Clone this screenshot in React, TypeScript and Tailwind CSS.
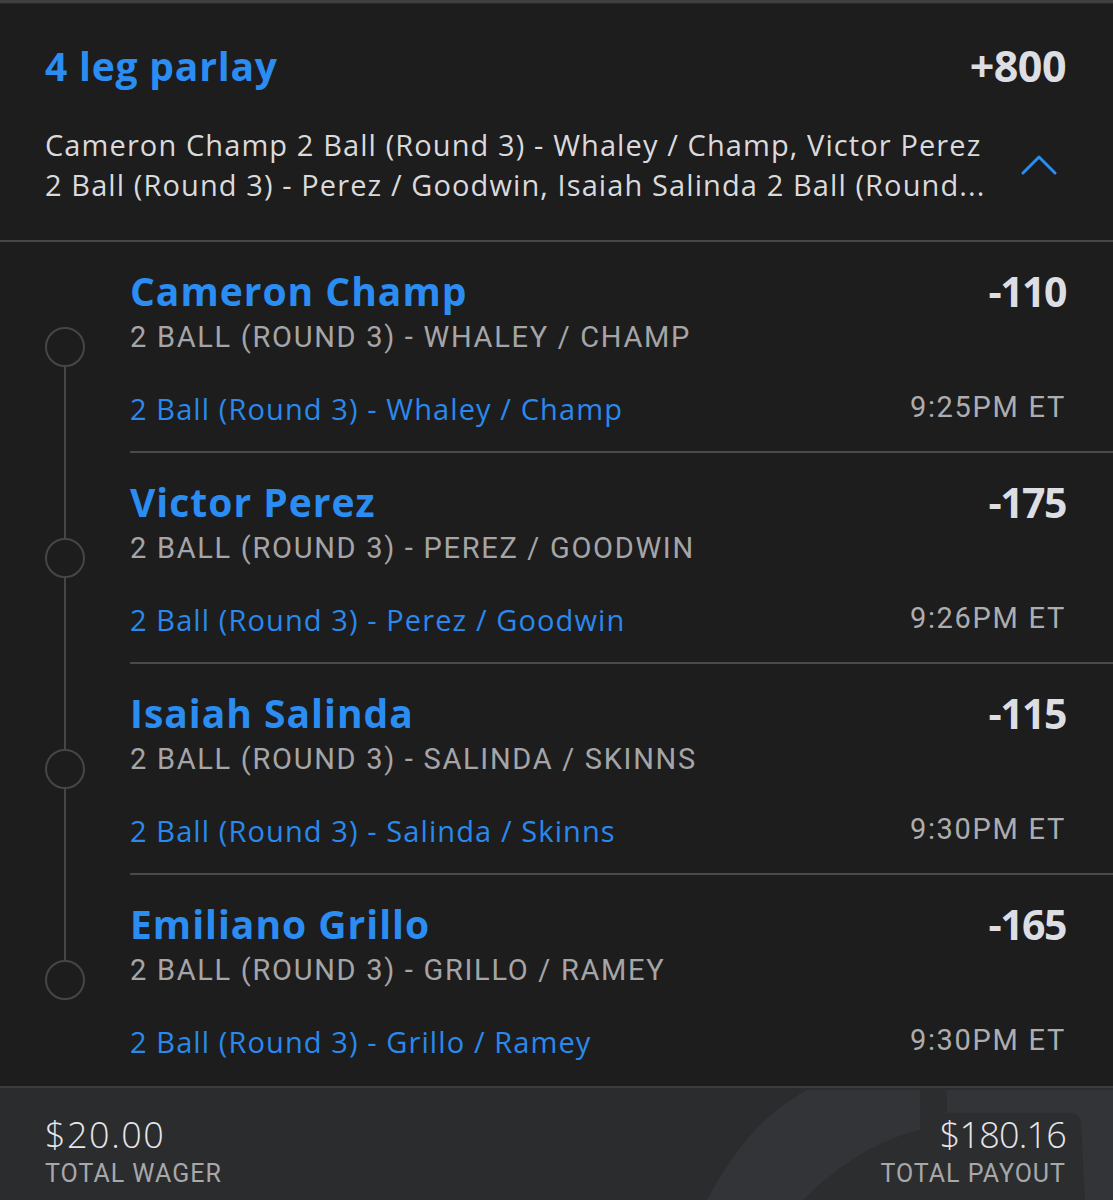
const legs = [
  { name: 'Cameron Champ', odds: '-110', market: '2 Ball (Round 3) - Whaley / Champ', time: '9:25PM ET' },
  { name: 'Victor Perez', odds: '-175', market: '2 Ball (Round 3) - Perez / Goodwin', time: '9:26PM ET' },
  { name: 'Isaiah Salinda', odds: '-115', market: '2 Ball (Round 3) - Salinda / Skinns', time: '9:30PM ET' },
  { name: 'Emiliano Grillo', odds: '-165', market: '2 Ball (Round 3) - Grillo / Ramey', time: '9:30PM ET' },
];

const sans = "font-['Open_Sans','Lato',sans-serif]";
const narrow = "font-['Roboto','Liberation_Sans',sans-serif]";

function Leg({ leg, first, last }: { leg: (typeof legs)[number]; first: boolean; last: boolean }) {
  return (
    <div className="flex h-[211px]">
      {/* timeline */}
      <div className="w-[130px] flex flex-col items-center shrink-0">
        <div className={`w-[2px] h-[85px] ${first ? '' : 'bg-[#464648]'}`} />
        <div className="w-[40px] h-[40px] rounded-full border-2 border-[#464648]" />
        <div className={`w-[2px] flex-1 ${last ? '' : 'bg-[#464648]'}`} />
      </div>

      <div className={`flex-1 pr-[47px] pt-[25px] ${last ? '' : 'border-b-2 border-[#4a4a4c]'}`}>
        <div className="flex justify-between items-center h-[48px]">
          <span className={`${sans} text-[39px] leading-[48px] font-bold text-[#2b8df2] tracking-[1px]`}>{leg.name}</span>
          <span className={`${sans} text-[41px] leading-[48px] font-bold text-[#dcdee3] tracking-[-1.5px]`}>{leg.odds}</span>
        </div>
        <div className={`${narrow} mt-[4px] text-[29px] leading-[36px] uppercase tracking-[1.7px] text-[#a5a5a7]`}>
          {leg.market}
        </div>
        <div className="mt-[36px] flex justify-between items-baseline">
          <span className={`${sans} text-[29px] leading-[36px] text-[#2a89ec] tracking-[1.1px]`}>{leg.market}</span>
          <span className={`${narrow} text-[29px] leading-[36px] tracking-[1.7px] text-[#adadaf] relative -top-[3px]`}>
            {leg.time}
          </span>
        </div>
      </div>
    </div>
  );
}

export default function App() {
  return (
    <div className="w-[1113px] h-[1200px] bg-[#1d1d1e] overflow-hidden flex flex-col">
      <div className="h-[4px] bg-[#3f3f41] border-b border-[#2a2a2b]" />

      {/* header */}
      <div className="pl-[45px] pr-[47px] pt-[38px] pb-[35px] border-b-2 border-[#464648]">
        <div className="flex justify-between items-center h-[48px]">
          <h1 className={`${sans} text-[39px] leading-[48px] font-bold text-[#2b8df2] tracking-[0.8px]`}>4 leg parlay</h1>
          <span className={`${sans} text-[43px] leading-[48px] font-bold text-[#dcdee3] tracking-[-0.5px]`}>+800</span>
        </div>
        <div className="mt-[35px] flex items-center justify-between">
          <p className={`${sans} text-[29px] leading-[40px] text-[#dadadc] tracking-[1.1px] w-[960px]`}>
            <span className="block whitespace-nowrap">Cameron Champ 2 Ball (Round 3) - Whaley / Champ, Victor Perez</span>
            <span className="block whitespace-nowrap">2 Ball (Round 3) - Perez / Goodwin, Isaiah Salinda 2 Ball (Round...</span>
          </p>
          <svg width="36" height="22" viewBox="0 0 36 22" className="mr-[9px]" fill="none">
            <path d="M2 19 L18 3 L34 19" stroke="#2b8df2" strokeWidth="3" strokeLinecap="round" strokeLinejoin="round" />
          </svg>
        </div>
      </div>

      {/* legs */}
      <div className="flex flex-col">
        {legs.map((leg, i) => (
          <Leg key={leg.name} leg={leg} first={i === 0} last={i === legs.length - 1} />
        ))}
      </div>

      {/* footer */}
      <div className="relative flex-1 border-t-2 border-[#3c3c3e] bg-[#2b2c2e] overflow-hidden">
        <svg className="absolute inset-0 w-full h-full" viewBox="0 0 1113 113" preserveAspectRatio="none">
          <path d="M707 113 C 735 60 765 25 807 2 L1113 2 L1113 113 Z" fill="#333437" />
          <path d="M803 113 C 840 75 880 52 920 42 L920 0 L947 0 L947 25 L1068 25 Q1080 25 1081 36 L1085 113 Z" fill="#2c2d2f" />
        </svg>
        <div className="relative flex justify-between pl-[45px] pr-[47px] pt-[27px]">
          <div>
            <div className={`${sans} text-[36px] leading-[40px] font-light text-[#e6e6e8] tracking-[1.5px]`}>$20.00</div>
            <div className={`${narrow} mt-[4px] text-[25px] leading-[30px] tracking-[1px] text-[#a8a8aa]`}>TOTAL WAGER</div>
          </div>
          <div className="text-right">
            <div className={`${sans} text-[36px] leading-[40px] font-light text-[#e6e6e8] tracking-[-0.8px]`}>$180.16</div>
            <div className={`${narrow} mt-[4px] text-[25px] leading-[30px] tracking-[1px] text-[#a8a8aa]`}>TOTAL PAYOUT</div>
          </div>
        </div>
      </div>
    </div>
  );
}
